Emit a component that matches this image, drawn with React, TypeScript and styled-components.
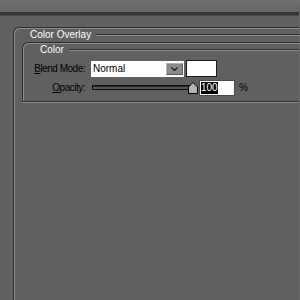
import React from "react";
import styled, { createGlobalStyle } from "styled-components";

const Global = createGlobalStyle`
  html, body { margin: 0; padding: 0; background: #606060; }
  body { font-family: "Liberation Sans", Arial, sans-serif; }
`;

const Page = styled.div`
  width: 300px;
  height: 300px;
  overflow: hidden;
  background: #606060;
  display: flex;
  flex-direction: column;
  box-sizing: border-box;
  border-right: 1px solid #6a6a6a;
  font-size: 10px;
  line-height: 12px;
`;

const TopBar = styled.div`
  height: 12px;
  flex: none;
  background: linear-gradient(#717171, #656565);
  border-bottom: 3px solid #353535;
  box-shadow: 0 1px 0 #4a4a4a;
`;

const Outer = styled.div`
  flex: 1;
  margin: 12px -20px 0 13px;
  border-top: 1px solid #2c2c2c;
  border-left: 1px solid #2c2c2c;
  border-top-left-radius: 6px;
  box-shadow: inset 1px 1px 0 #8e8e8e;
  padding: 1px 0 0 1px;
  display: flex;
  flex-direction: column;
`;

const Header = styled.div<{ $pad: number }>`
  display: flex;
  align-items: center;
  height: 12px;
  gap: 5px;
  padding-left: ${(p) => p.$pad}px;
`;

const Legend = styled.span`
  color: #ffffff;
  white-space: nowrap;
`;

const Rule = styled.div`
  flex: 1;
  height: 0;
  border-top: 1px solid #2c2c2c;
  border-bottom: 1px solid #8e8e8e;
`;

const Inner = styled.div`
  margin: 1px 0 0 7px;
  border-top: 1px solid #2c2c2c;
  border-left: 1px solid #2c2c2c;
  border-bottom: 1px solid #2c2c2c;
  border-top-left-radius: 6px;
  box-shadow: inset 1px 1px 0 #8e8e8e, 0 1px 0 #8e8e8e;
  padding: 1px 0 5px 1px;
  display: flex;
  flex-direction: column;
`;

const Row = styled.div<{ $top: number }>`
  display: flex;
  align-items: center;
  margin-top: ${(p) => p.$top}px;
  height: 17px;
`;

const Label = styled.span`
  width: 61px;
  text-align: right;
  color: #000;
  margin-right: 6px;
  white-space: nowrap;
  letter-spacing: -0.5px;
`;

const Select = styled.div`
  width: 93px;
  height: 16px;
  background: #fff;
  display: flex;
  align-items: center;
  box-sizing: border-box;
  padding: 0 1px 0 2px;
  color: #000;
`;

const SelectText = styled.span`
  flex: 1;
`;

const DropButton = styled.div`
  width: 17px;
  height: 12px;
  box-sizing: border-box;
  background: #8a8a8a;
  border: 1px solid #5a5a5a;
  border-top-color: #b0b0b0;
  border-left-color: #b0b0b0;
  display: flex;
  align-items: center;
  justify-content: center;
`;

const Swatch = styled.div`
  width: 31px;
  height: 17px;
  margin-left: 2px;
  box-sizing: border-box;
  background: #fff;
  border: 1px solid #1a1a1a;
`;

const Slider = styled.div`
  position: relative;
  width: 105px;
  height: 17px;
  margin-left: 1px;
  display: flex;
  align-items: center;
`;

const Track = styled.div`
  width: 100px;
  height: 5px;
  box-sizing: border-box;
  border: 1px solid #0a0a0a;
  background: #555;
  box-shadow: inset 0 1px 0 #2a2a2a;
`;

const Thumb = styled.svg`
  position: absolute;
  left: 96px;
  top: 3px;
`;

const NumInput = styled.div`
  width: 36px;
  height: 16px;
  margin-left: 2px;
  box-sizing: border-box;
  background: #fff;
  border: 1px solid #4a4a4a;
  display: flex;
  align-items: center;
  padding-left: 1px;
`;

const Selected = styled.span`
  background: #000;
  color: #fff;
  line-height: 12px;
`;

const Unit = styled.span`
  margin-left: 4px;
  color: #000;
`;

export default function App() {
  return (
    <Page>
      <Global />
      <TopBar />
      <Outer>
        <Header $pad={15}>
          <Legend>Color Overlay</Legend>
          <Rule />
        </Header>
        <Inner>
          <Header $pad={16}>
            <Legend>Color</Legend>
            <Rule />
          </Header>
          <Row $top={4}>
            <Label>
              <u>B</u>lend Mode:
            </Label>
            <Select>
              <SelectText>Normal</SelectText>
              <DropButton>
                <svg width="7" height="4" viewBox="0 0 7 4">
                  <path d="M0.5 0.5 L3.5 3.5 L6.5 0.5" fill="none" stroke="#1a1a1a" strokeWidth="1.2" />
                </svg>
              </DropButton>
            </Select>
            <Swatch />
          </Row>
          <Row $top={2}>
            <Label>
              <u>O</u>pacity:
            </Label>
            <Slider>
              <Track />
              <Thumb width="10" height="12" viewBox="0 0 10 12">
                <path d="M5 0.5 L9.5 5 L9.5 11.5 L0.5 11.5 L0.5 5 Z" fill="#b4b4b4" stroke="#000" strokeWidth="1" />
              </Thumb>
            </Slider>
            <NumInput>
              <Selected>100</Selected>
            </NumInput>
            <Unit>%</Unit>
          </Row>
        </Inner>
      </Outer>
    </Page>
  );
}
